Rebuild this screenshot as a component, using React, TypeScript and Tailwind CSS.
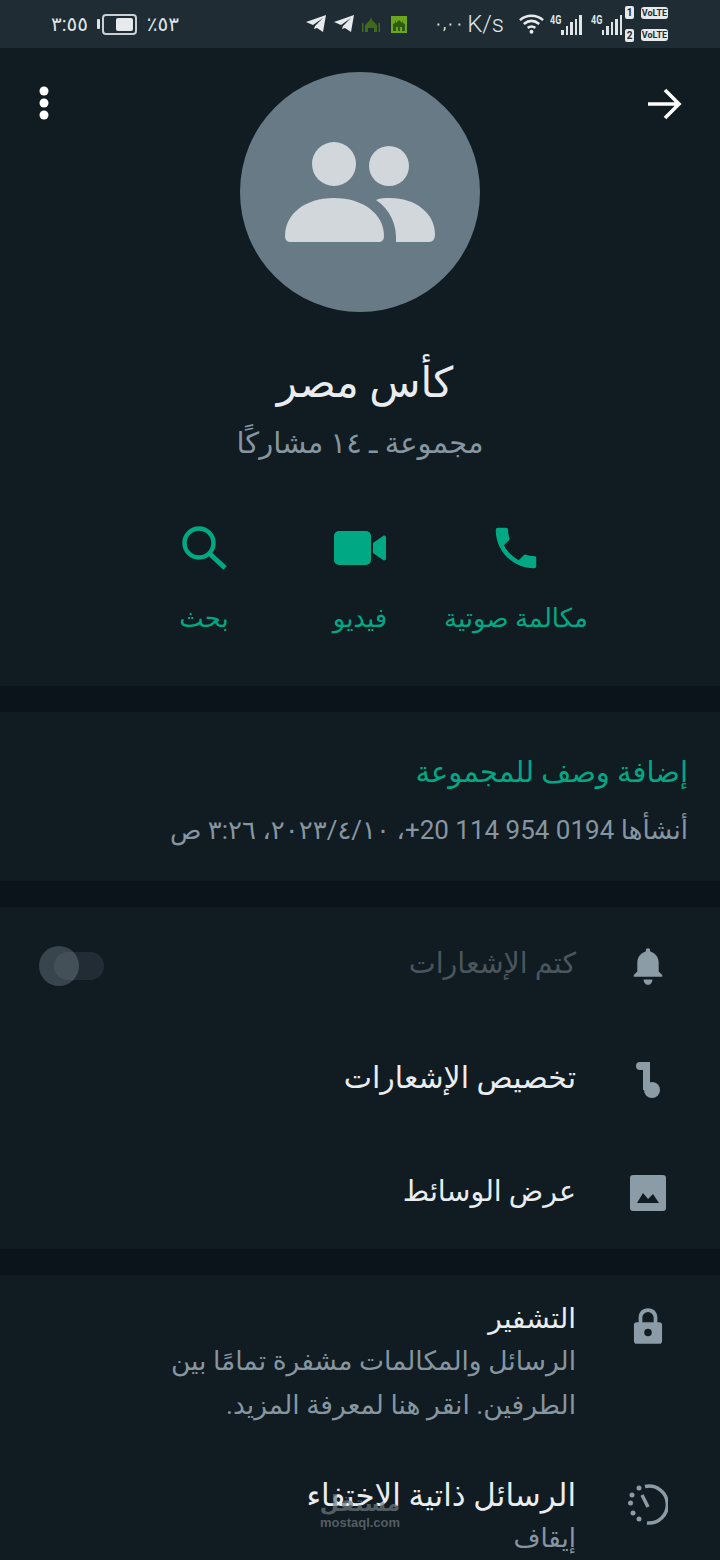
const ICON = "#8c9ca6";

function Bars() {
  return (
    <div className="flex items-end gap-[2px]">
      <div className="h-[5px] w-[2.5px] bg-[#dfe4e7]" />
      <div className="h-[9px] w-[2.5px] bg-[#dfe4e7]" />
      <div className="h-[13px] w-[2.5px] bg-[#dfe4e7]" />
      <div className="h-[16px] w-[2.5px] bg-[#dfe4e7]" />
      <div className="h-[20px] w-[2.5px] bg-[#dfe4e7]" />
    </div>
  );
}

function Plane() {
  return (
    <svg width="22" height="20" viewBox="0 0 22 20">
      <path d="M1 8 21 1l-3 17-6-4-3 1 1-3 8-8-10 7z" fill="#e6eaec" />
    </svg>
  );
}

function Mosque({ bright }: { bright?: boolean }) {
  return (
    <svg width="18" height="17" viewBox="0 0 18 17">
      {bright ? (
        <>
          <rect width="16" height="17" x="1" fill="#6aa61e" />
          <path d="M3 15V8l2-1v-3l1 3 3-3 3 3 1-3v3l2 1v7h-3v-4h-2v4H8v-4H6v4z" fill="#2f5a12" />
        </>
      ) : (
        <path d="M0 16V7h1.500v9zM3 16V9l5-5 1-3 1 3 5 5v7h-3v-4H6v4zM16.500 16V7H18v9z" fill="#3f6a1c" />
      )}
    </svg>
  );
}

function Network() {
  return (
    <div className="flex items-start gap-[1px]">
      <span className="w-[10px] origin-left scale-x-75 text-[12px] font-bold leading-[13px]">4G</span>
      <div className="mt-[1px]">
        <Bars />
      </div>
    </div>
  );
}

function StatusBar() {
  return (
    <div className="flex h-12 shrink-0 items-center bg-[#1f2c34] text-[#dfe4e7]">
      <div className="ml-[51px] flex w-[128px] items-center justify-between text-[20px] leading-none">
        <span>٣:٥٥</span>
        <div className="flex items-center gap-[2px]">
          <div className="h-[10px] w-[3px] rounded-[1px] bg-[#dfe4e7]" />
          <div className="flex h-[21px] w-[35px] items-center justify-end rounded-[4px] border-2 border-[#c9cfd3] pr-[2px]">
            <div className="h-[13px] w-[17px] rounded-[2px] bg-[#e6eaec]" />
          </div>
        </div>
        <span>٪٥٣</span>
      </div>
      <div className="ml-[126px] flex items-center gap-[6px]">
        <Plane />
        <Plane />
      </div>
      <div className="ml-[7px] flex items-center gap-[10px]">
        <Mosque />
        <Mosque bright />
      </div>
      <div className="ml-[26px] flex w-[62px] items-center gap-[3px] whitespace-nowrap font-['Roboto'] leading-none">
        <span className="text-[16px]">٠,٠٠</span>
        <span className="text-[24px] font-light">K/s</span>
      </div>
      <svg className="ml-[22px]" width="27" height="24" viewBox="0 0 28 24" fill="none" stroke="#e6eaec" strokeWidth="2.6">
        <path d="M2 8c7-6 17-6 24 0M6 12c5-4 11-4 16 0M10 16c3-2 5-2 8 0" />
        <circle cx="14" cy="20" r="2" fill="#e6eaec" stroke="none" />
      </svg>
      <div className="ml-[5px]">
        <Network />
      </div>
      <div className="ml-[9px]">
        <Network />
      </div>
      <div className="ml-[3px] flex flex-col gap-[10px]">
        <span className="flex h-[13px] w-[9px] items-center justify-center rounded-[2px] bg-[#e6eaec] text-[10px] font-bold leading-none text-[#1f2c34]">1</span>
        <span className="flex h-[13px] w-[9px] items-center justify-center rounded-[2px] bg-[#e6eaec] text-[10px] font-bold leading-none text-[#1f2c34]">2</span>
      </div>
      <div className="ml-[7px] flex flex-col gap-[10px]">
        <span className="flex h-[12px] w-[27px] items-center justify-center overflow-hidden rounded-[3px] bg-[#e6eaec] text-[9px] font-bold leading-none text-[#1f2c34]">VoLTE</span>
        <span className="flex h-[12px] w-[27px] items-center justify-center overflow-hidden rounded-[3px] bg-[#e6eaec] text-[9px] font-bold leading-none text-[#1f2c34]">VoLTE</span>
      </div>
    </div>
  );
}

function Action({ label, children }: { label: string; children: React.ReactNode }) {
  return (
    <div className="flex w-[156px] flex-col items-center">
      <div className="flex h-12 items-center justify-center">{children}</div>
      <div className="mt-[22px] whitespace-nowrap text-[26px] leading-[48px] text-[#00a884]">{label}</div>
    </div>
  );
}

function Divider() {
  return <div className="h-[26px] bg-[#0b141a]" />;
}

function Row({ title, className, children }: { title: string; className: string; children: React.ReactNode }) {
  return (
    <div className="flex h-[114px] items-center gap-12 pr-12">
      <div className="flex w-12 justify-center">{children}</div>
      <div className={className}>{title}</div>
    </div>
  );
}

export default function App() {
  return (
    <div
      dir="rtl"
      className="relative h-[1560px] w-[720px] overflow-hidden bg-[#111b22] font-['Roboto','Noto_Sans','DejaVu_Sans',sans-serif]"
    >
      <div dir="ltr">
        <StatusBar />
      </div>

      <div className="relative flex h-[638px] flex-col items-center pt-6">
        <svg className="absolute left-[38px] top-[38px]" width="12" height="34" viewBox="0 0 12 34" fill="#fff">
          <circle cx="6" cy="5" r="4.5" />
          <circle cx="6" cy="17" r="4.5" />
          <circle cx="6" cy="29" r="4.5" />
        </svg>
        <svg className="absolute right-[38px] top-[40px]" width="36" height="32" viewBox="0 0 36 32" fill="none" stroke="#fff" strokeWidth="3.6">
          <path d="M2 16h30M19 2l14 14-14 14" />
        </svg>

        <div className="flex h-60 w-60 items-center justify-center rounded-full bg-[#687a86]">
          <svg width="152" height="104" viewBox="0 0 152 104" fill="#d1d7db">
            <circle cx="50" cy="24" r="22" />
            <circle cx="105" cy="26" r="20" />
            <path d="M1 96c0-22 20-38 49-38s50 16 50 38c0 4-2 6-6 6H7c-4 0-6-2-6-6z" />
            <path d="M92 60c4-2 9-2 14-2 25 0 45 15 45 36 0 5-2 8-6 8h-33c1-16-5-32-20-42z" />
          </svg>
        </div>

        <div className="mt-[41px] pl-[10px] text-[42px] leading-[60px] text-[#e9edef]">كأس مصر</div>
        <div className="mt-[12px] text-[29px] leading-9 text-[#8696a0]">مجموعة ـ ١٤ مشاركًا</div>

        <div className="mt-[63px] flex justify-center">
          <Action label="مكالمة صوتية">
            <svg width="54" height="54" viewBox="0 0 24 24" fill="#00a884">
              <path d="M6.6 10.8c1.4 2.8 3.8 5.1 6.6 6.6l2.2-2.2c.3-.3.7-.4 1-.2 1.100.4 2.300.6 3.600.6.600 0 1 .4 1 1V20c0 .6-.4 1-1 1C10.600 21 3 13.400 3 4c0-.6.400-1 1-1h3.500c.6 0 1 .4 1 1 0 1.300.2 2.500.6 3.600.1.300 0 .7-.2 1z" />
            </svg>
          </Action>
          <Action label="فيديو">
            <svg width="52" height="34" viewBox="0 0 52 34" fill="#00a884">
              <rect width="37" height="34" rx="5" />
              <path d="M39 12 49 5c1-1 3 0 3 1v22c0 1-2 2-3 1L39 22z" />
            </svg>
          </Action>
          <Action label="بحث">
            <svg width="46" height="46" viewBox="0 0 46 46" fill="none" stroke="#00a884" strokeWidth="4.500">
              <circle cx="18" cy="18" r="14.500" />
              <path d="m28 28 16 15" strokeWidth="5" />
            </svg>
          </Action>
        </div>
      </div>

      <Divider />

      <div className="flex h-[169px] flex-col px-8 pt-[40px]">
        <div className="text-[29px] leading-10 text-[#00a884]">إضافة وصف للمجموعة</div>
        <div className="mt-[18px] text-[26px] leading-10 text-[#8696a0]">أنشأها ‎+20 114 954 0194‎، ٢٠٢٣/٤/١٠، ٣:٢٦ ص</div>
      </div>

      <Divider />

      <div className="relative">
        <div className="absolute left-[39px] top-[39px] h-10 w-[65px]">
          <div className="absolute left-0 top-0 h-10 w-10 rounded-full bg-[#38454c]" />
          <div className="absolute left-[15px] top-[6px] h-[28px] w-[50px] rounded-full bg-[#8696a0]/15" />
        </div>
        <Row title="كتم الإشعارات" className="text-[28.500px] leading-10 text-[#4a565e]">
          <svg className="mt-[5px]" width="32" height="40" viewBox="0 0 36 44" fill={ICON}>
            <path d="M18 1c1.500 0 2.500 1 2.500 2.500v1C26 6 30 11 30 17v10l4 4v2H2v-2l4-4V17c0-6 4-11 9.500-12.500v-1C15.500 2 16.500 1 18 1z" />
            <path d="M13 36h10c0 3-2 6-5 6s-5-3-5-6z" />
          </svg>
        </Row>
        <Row title="تخصيص الإشعارات" className="text-[30px] leading-10 text-[#e9edef]">
          <svg className="mt-[4px]" width="24" height="36" viewBox="0 0 24 36" fill={ICON}>
            <rect width="13" height="8" rx="4" />
            <rect width="7" height="28" x="7" />
            <circle cx="16" cy="28" r="8" />
          </svg>
        </Row>
        <Row title="عرض الوسائط" className="text-[28.500px] leading-10 text-[#e9edef]">
          <svg className="mt-[1px]" width="36" height="36" viewBox="0 0 36 36">
            <rect width="36" height="36" rx="3" fill={ICON} />
            <path d="m7 28 6-10 5 6 5-5 6 9z" fill="#111b22" />
          </svg>
        </Row>
      </div>

      <Divider />

      <div className="flex gap-12 pr-12 pt-[24px]">
        <div className="flex w-12 shrink-0 justify-center pt-[8px]">
          <svg width="30" height="38" viewBox="0 0 32 40" fill={ICON}>
            <path d="M6 16v-5C6 5 10 1 16 1s10 4 10 10v5h2c2 0 3 1 3 3v17c0 2-1 3-3 3H4c-2 0-3-1-3-3V19c0-2 1-3 3-3zm4 0h12v-5c0-3-3-6-6-6s-6 3-6 6z" />
            <circle cx="16" cy="27" r="4" fill="#111b22" />
          </svg>
        </div>
        <div>
          <div className="text-[28px] leading-10 text-[#e9edef]">التشفير</div>
          <div className="w-[420px] text-[26.500px] leading-[44px] text-[#8696a0]">الرسائل والمكالمات مشفرة تمامًا بين الطرفين. انقر هنا لمعرفة المزيد.</div>
        </div>
      </div>

      <div className="mt-[49px] flex gap-12 pr-12">
        <div className="flex w-12 shrink-0 justify-center pt-[8px]">
          <svg width="40" height="41" viewBox="0 0 40 41" fill="none">
            <path d="M17 2.500a18.500 18.500 0 1 1 2 36.500" stroke={ICON} strokeWidth="3.500" />
            <path d="m14 11 6 12" stroke={ICON} strokeWidth="3.500" />
            <g fill={ICON}>
              <circle cx="11" cy="4" r="2.500" />
              <circle cx="4" cy="11" r="2.500" />
              <circle cx="2.500" cy="19" r="2.500" />
              <circle cx="5" cy="29" r="2.500" />
              <circle cx="11" cy="35" r="2.500" />
            </g>
          </svg>
        </div>
        <div>
          <div className="text-[31px] leading-10 text-[#e9edef]">الرسائل ذاتية الاختفاء</div>
          <div className="text-[26px] leading-[44px] text-[#8696a0]">إيقاف</div>
        </div>
      </div>

      <div dir="ltr" className="absolute left-[316px] top-[1492px] flex w-[88px] flex-col items-center text-[#6f7a80] opacity-70">
        <span dir="rtl" className="text-[22px] font-bold leading-[24px]">مستقل</span>
        <span className="font-['Liberation_Sans'] text-[13px] font-bold leading-[14px]">mostaql.com</span>
      </div>
    </div>
  );
}
